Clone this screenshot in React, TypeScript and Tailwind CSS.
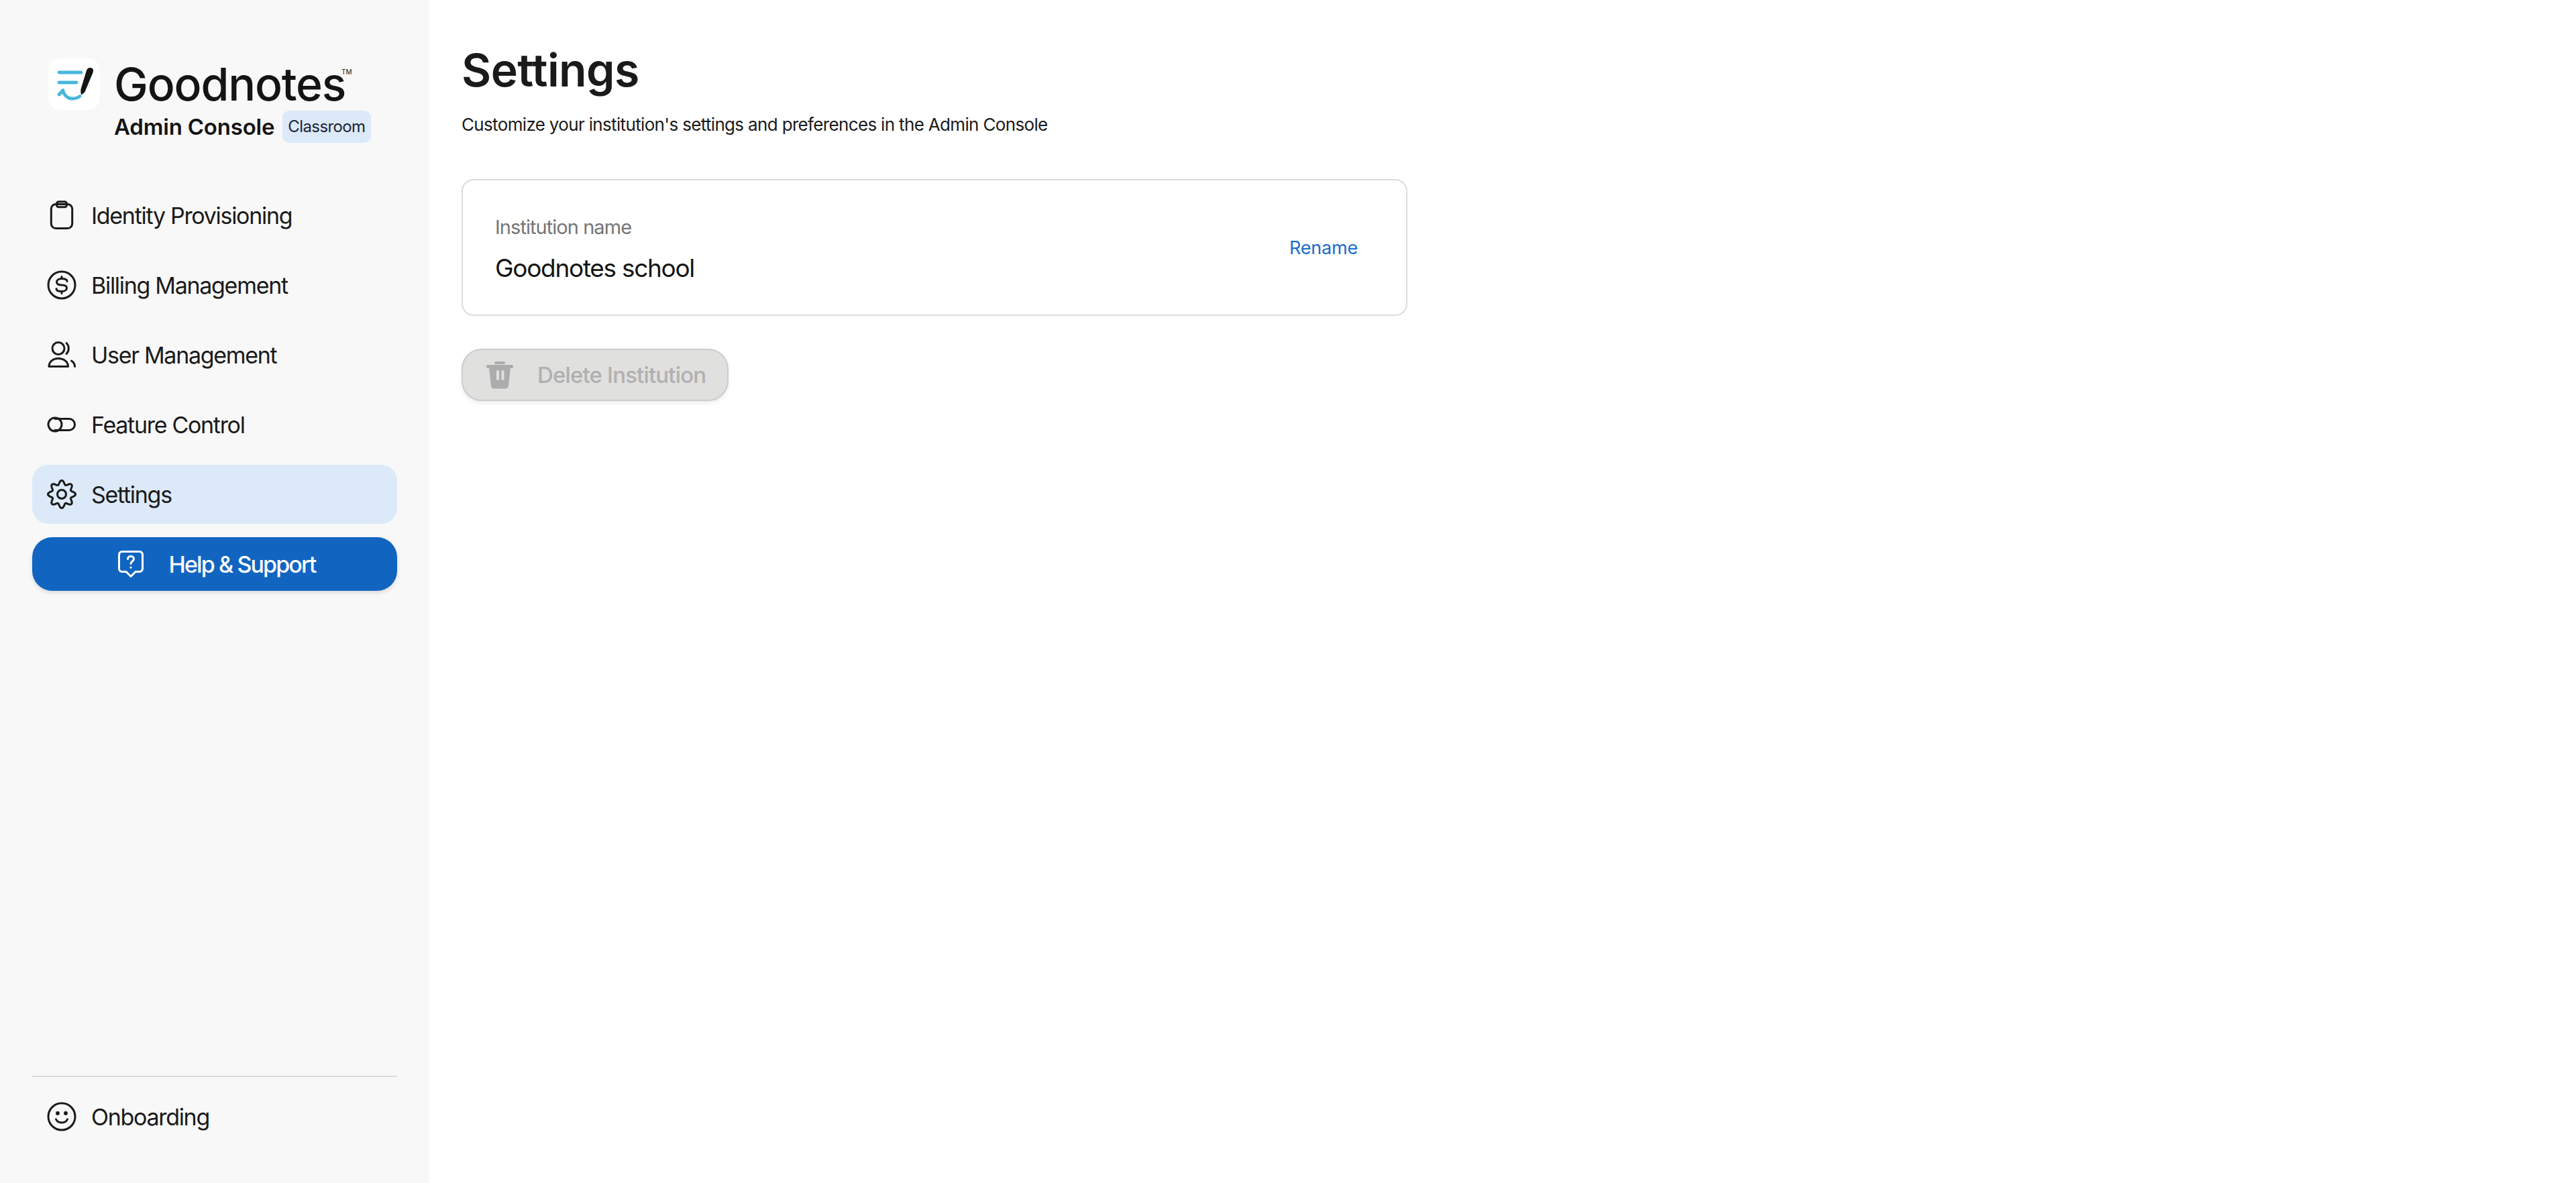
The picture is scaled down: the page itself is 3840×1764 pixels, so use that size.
import { ReactNode } from 'react';

// gear outline: 8 soft teeth around the centre
const gearPath = Array.from({ length: 120 }, (_, i) => {
    const t = (i / 120) * Math.PI * 2;
    const r = 17.6 + 3 * Math.cos(8 * t);
    const x = 22 + r * Math.sin(t);
    const y = 22 - r * Math.cos(t);
    return `${i === 0 ? 'M' : 'L'}${x.toFixed(2)} ${y.toFixed(2)}`;
}).join(' ') + ' Z';

function NavIcon({ children }: { children: ReactNode }) {
    return (
        <svg viewBox="0 0 44 44" fill="none" stroke="currentColor" strokeWidth={3} strokeLinecap="round" strokeLinejoin="round" className="w-[44px] h-[44px] shrink-0 text-[#1a1a1a]">
            {children}
        </svg>
    );
}

const navItems: { label: string; active?: boolean; icon: ReactNode }[] = [
    {
        label: 'Identity Provisioning',
        icon: (
            <>
                <rect x="6.3" y="5.5" width="31.4" height="36" rx="7" />
                <rect x="14.5" y="1.7" width="15" height="8" rx="3" />
            </>
        ),
    },
    {
        label: 'Billing Management',
        icon: (
            <>
                <circle cx="22" cy="22" r="20" />
                <path d="M30 16.5C30 14 26.5 12.5 22 12.5C17.5 12.5 14.5 14.5 14.5 17.5C14.5 21 18 22 22 22C26 22 29.5 23 29.5 26.5C29.5 29.5 26.5 31.5 22 31.5C17.5 31.5 14 30 14 27.5M22 9.5V12.5M22 31.5V34.5" />
            </>
        ),
    },
    {
        label: 'User Management',
        icon: (
            <>
                <circle cx="17" cy="12.5" r="9" />
                <path d="M29 4.5C33.5 9 33.5 16 29 20.5" />
                <path d="M3 39.5C3 32.5 9 27.5 17 27.5C25 27.5 31.5 32.5 31.5 39.5Z" />
                <path d="M36.5 31C39.5 33 41.5 36 41.5 39.5" />
            </>
        ),
    },
    {
        label: 'Feature Control',
        icon: (
            <>
                <circle cx="12" cy="22" r="10" />
                <path d="M12 13.5H33a8.5 8.5 0 0 1 0 17H12" />
            </>
        ),
    },
    {
        label: 'Settings',
        active: true,
        icon: (
            <>
                <path d={gearPath} />
                <circle cx="22" cy="22" r="6.5" />
            </>
        ),
    },
];

function GoodnotesLogo() {
    return (
        <svg viewBox="0 0 77 77" className="w-[77px] h-[77px] shrink-0">
            <rect width="77" height="77" rx="18" fill="#ffffff" />
            <g fill="none" stroke="#45b7dc" strokeWidth="4.8" strokeLinecap="round" strokeLinejoin="round">
                <path d="M16 21H49" />
                <path d="M16 36H42" />
                <path d="M21.5 48C24 56 30 60 36 60C40 60 44 59 47 56.5" />
                <path d="M16 54L22 47.5" />
            </g>
            <path d="M58 16C60 13 67 13 67 18C67 19.5 66.5 21 66 22.5L54.5 50C53 52 50 54 49 54.5C48.5 52 48 49 48.5 46L57 18Z" fill="#141414" />
        </svg>
    );
}

export default function App() {
    return (
        <div className="flex h-screen bg-white text-[#1a1a1a] font-['Inter',sans-serif]">
            <aside className="flex flex-col w-[640px] shrink-0 h-full bg-[#f8f8f8] px-[48px] pb-[55px]">
                <div className="pt-[87px] pl-[24px]">
                    <div className="flex h-[77px]">
                        <GoodnotesLogo />
                        <div className="relative ml-[21px]">
                            <span className="block text-[68px] leading-[77px] font-medium tracking-[-1.2px] text-[#141414]">Goodnotes</span>
                            <span className="absolute left-[339px] top-[15px] text-[10px] leading-[10px] text-[#141414]">TM</span>
                        </div>
                    </div>
                    <div className="flex items-center gap-[12px] pl-[98px] mt-[1px]">
                        <span className="text-[33px] leading-[48px] font-semibold tracking-[-0.2px] text-[#141414]">Admin Console</span>
                        <span className="h-[48px] px-[8px] rounded-[10px] bg-[#dce9f9] text-[24px] leading-[48px] tracking-[-0.6px] text-[#1c2333]">Classroom</span>
                    </div>
                </div>

                <nav className="flex flex-col gap-[16px] mt-[64px]">
                    {navItems.map(item => (
                        <div
                            key={item.label}
                            className={`flex items-center gap-[22px] h-[88px] pl-[22px] rounded-[24px] ${item.active ? 'bg-[#dce9f9]' : ''}`}
                        >
                            <NavIcon>{item.icon}</NavIcon>
                            <span className="text-[34px] tracking-[-1.3px] text-[#1a1a1a]">{item.label}</span>
                        </div>
                    ))}
                </nav>

                <button className="flex items-center justify-center gap-[38px] h-[80px] mt-[20px] pl-[6px] rounded-[30px] bg-[#1165c1] text-white shadow-[0_3px_6px_rgba(0,0,0,0.12)]">
                    <svg viewBox="0 0 38 40" fill="none" stroke="currentColor" strokeWidth={3} strokeLinecap="round" strokeLinejoin="round" className="w-[38px] h-[40px]">
                        <path d="M6 1.5H32A4.5 4.5 0 0 1 36.5 6V27A4.5 4.5 0 0 1 32 31.5H26L19 38.5L12 31.5H6A4.5 4.5 0 0 1 1.5 27V6A4.5 4.5 0 0 1 6 1.5Z" />
                        <path d="M14.5 12.5C14.5 10 16.5 8.5 19 8.5C21.5 8.5 23.5 10 23.5 12.5C23.5 16 19 16 19 19.5" />
                        <path d="M19 25V25.2" />
                    </svg>
                    <span className="text-[34px] font-medium tracking-[-1.9px]">Help &amp; Support</span>
                </button>

                <div className="mt-auto border-t-2 border-[#d9d9d9] pt-[15px]">
                    <div className="flex items-center gap-[22px] h-[88px] pl-[22px]">
                        <NavIcon>
                            <circle cx="22" cy="22" r="20" />
                            <circle cx="16" cy="17" r="1.4" fill="currentColor" />
                            <circle cx="28" cy="17" r="1.4" fill="currentColor" />
                            <path d="M13.5 26C15 29.5 18 31 22 31C26 31 29 29.5 30.5 26" />
                        </NavIcon>
                        <span className="text-[34px] tracking-[-1.3px] text-[#1a1a1a]">Onboarding</span>
                    </div>
                </div>
            </aside>

            <main className="flex-1 pl-[48px] pt-[63px]">
                <h1 className="text-[68px] leading-[82px] font-semibold tracking-[-0.6px] text-[#1a1a1a]">Settings</h1>
                <p className="mt-[21px] text-[26px] leading-[40px] tracking-[-0.66px] text-[#1a1a1a]">Customize your institution's settings and preferences in the Admin Console</p>

                <div className="flex items-center justify-between w-[1410px] h-[204px] mt-[61px] pl-[48px] pr-[72px] border-2 border-[#dcdcdc] rounded-[18px]">
                    <div>
                        <div className="text-[29px] leading-[40px] tracking-[-0.95px] text-[#757575]">Institution name</div>
                        <div className="mt-[21px] text-[37px] leading-[40px] tracking-[-1.3px] text-[#141414]">Goodnotes school</div>
                    </div>
                    <span className="mt-[2px] text-[27px] tracking-[-0.2px] text-[#1a6dcc]">Rename</span>
                </div>

                <button disabled className="flex items-center gap-[36px] w-[398px] h-[78px] mt-[49px] pl-[35px] rounded-[30px] bg-[#e0e0df] border-2 border-[#cccccc] shadow-[0_3px_6px_rgba(0,0,0,0.08)]">
                    <svg viewBox="0 0 40 41" className="w-[40px] h-[41px] shrink-0">
                        <rect x="12" y="0" width="16" height="4" rx="2" fill="#acacac" />
                        <rect x="0" y="5" width="40" height="5" rx="2.5" fill="#acacac" />
                        <path d="M4 9H36L33 36C32.6 39 31 40.5 28 40.5H12C9 40.5 7.4 39 7 36Z" fill="#acacac" />
                        <rect x="15" y="13" width="4" height="15" rx="2" fill="#e0e0df" />
                        <rect x="22.5" y="13" width="4" height="15" rx="2" fill="#e0e0df" />
                    </svg>
                    <span className="relative top-[1px] text-[33px] font-medium tracking-[-0.85px] text-[#b0b0b0]">Delete Institution</span>
                </button>
            </main>
        </div>
    );
}
